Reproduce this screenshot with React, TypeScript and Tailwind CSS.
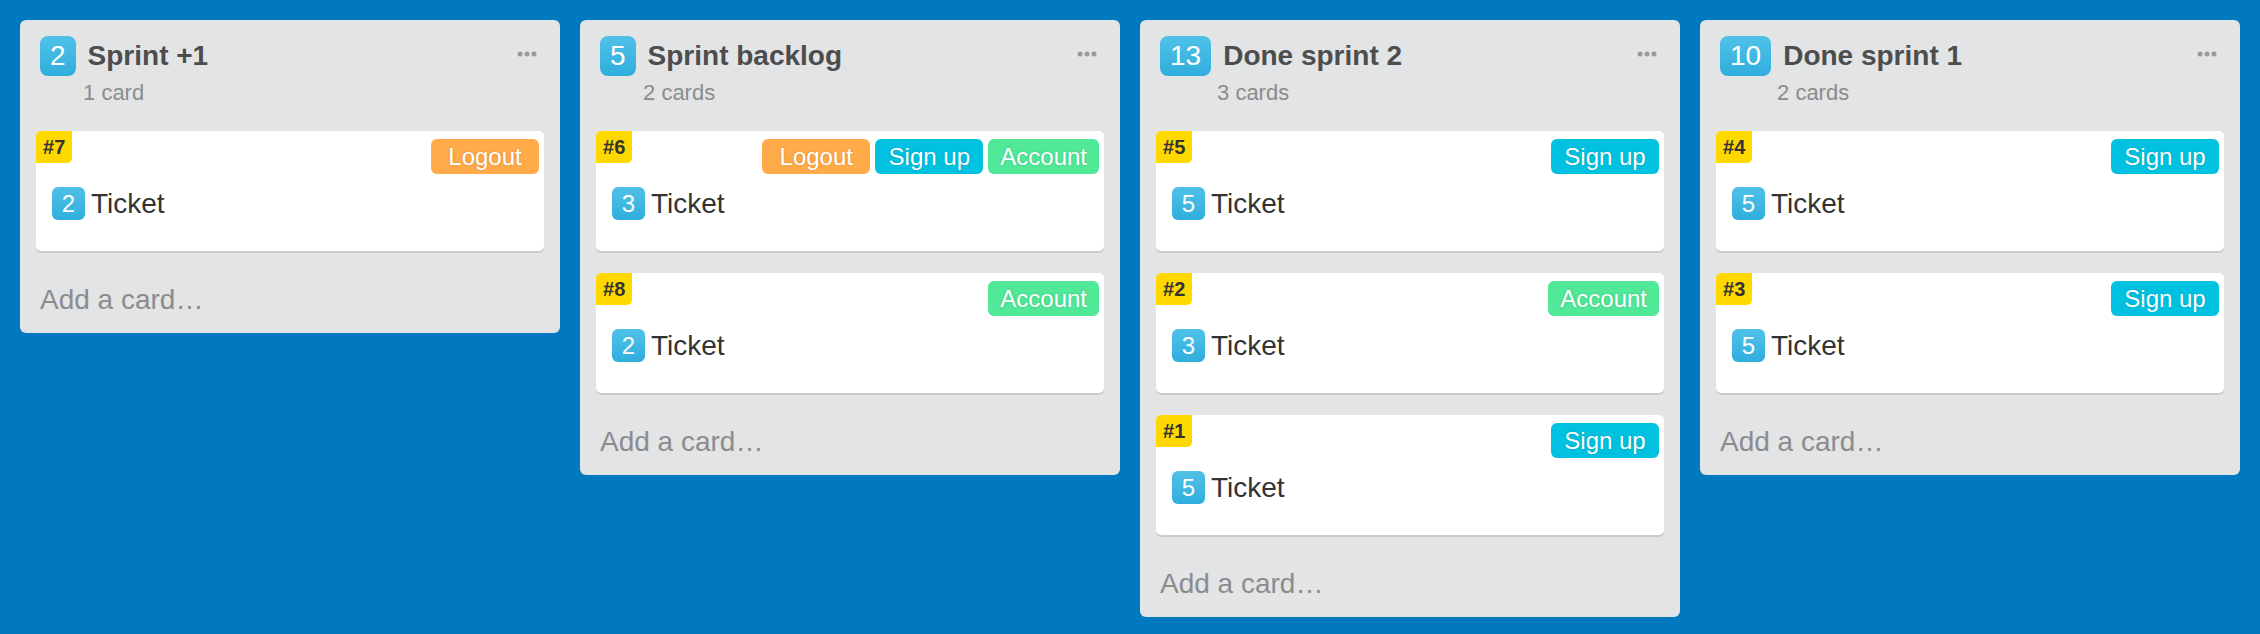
import React from "react";

type Label = "Logout" | "Sign up" | "Account";

type Ticket = {
  id: number;
  points: number;
  labels: Label[];
};

type Column = {
  points: number;
  title: string;
  tickets: Ticket[];
};

const labelColors: Record<Label, string> = {
  Logout: "bg-[#ffab4a]",
  "Sign up": "bg-[#00c2e0]",
  Account: "bg-[#51e898]",
};

const columns: Column[] = [
  {
    points: 2,
    title: "Sprint +1",
    tickets: [{ id: 7, points: 2, labels: ["Logout"] }],
  },
  {
    points: 5,
    title: "Sprint backlog",
    tickets: [
      { id: 6, points: 3, labels: ["Logout", "Sign up", "Account"] },
      { id: 8, points: 2, labels: ["Account"] },
    ],
  },
  {
    points: 13,
    title: "Done sprint 2",
    tickets: [
      { id: 5, points: 5, labels: ["Sign up"] },
      { id: 2, points: 3, labels: ["Account"] },
      { id: 1, points: 5, labels: ["Sign up"] },
    ],
  },
  {
    points: 10,
    title: "Done sprint 1",
    tickets: [
      { id: 4, points: 5, labels: ["Sign up"] },
      { id: 3, points: 5, labels: ["Sign up"] },
    ],
  },
];

const Dots = () => (
  <svg width="20" height="6" viewBox="0 0 20 6" className="fill-[#999]">
    <circle cx="3" cy="3" r="2.5" />
    <circle cx="10" cy="3" r="2.5" />
    <circle cx="17" cy="3" r="2.5" />
  </svg>
);

const TicketCard = ({ ticket }: { ticket: Ticket }) => (
  <div className="relative h-[120px] rounded-[5px] bg-white shadow-[0_2px_0_#c8cbce]">
    {/* ticket number tag */}
    <div className="absolute left-0 top-0 flex h-[32px] items-center rounded-tl-[5px] rounded-br-[5px] bg-[#ffd800] px-[7px] text-[20px] font-bold leading-none text-[#333]">
      #{ticket.id}
    </div>

    <div className="flex justify-end gap-[5px] pr-[5px] pt-[8px]">
      {ticket.labels.map((label) => (
        <span
          key={label}
          className={`flex h-[35px] min-w-[108px] items-center justify-center rounded-[6px] px-[12px] text-[24px] leading-none text-white [text-shadow:0_0_3px_rgba(0,0,0,0.15)] ${labelColors[label]}`}
        >
          {label}
        </span>
      ))}
    </div>

    <div className="mt-[13px] flex items-center gap-[6px] pl-[16px]">
      <span className="flex h-[33px] w-[33px] items-center justify-center rounded-[6px] bg-linear-to-b from-[#50c1e7] to-[#2eaedd] text-[24px] leading-none text-white">
        {ticket.points}
      </span>
      <span className="text-[28px] leading-none text-[#333]">Ticket</span>
    </div>
  </div>
);

const List = ({ column }: { column: Column }) => {
  const count = column.tickets.length;
  return (
    <section className="w-[540px] shrink-0 rounded-[6px] bg-[#e2e4e6] px-[16px] pt-[16px] pb-[17px]">
      <header className="pl-[4px]">
        <div className="flex items-center">
          <span className="flex h-[40px] items-center rounded-[8px] bg-linear-to-b from-[#4fc1e7] to-[#2faedd] px-[10px] text-[28px] leading-none text-white">
            {column.points}
          </span>
          <h2 className="ml-[12px] text-[28px] font-bold leading-none text-[#4d4d4d]">
            {column.title}
          </h2>
          <button className="ml-auto mr-[7px] mt-[-4px]">
            <Dots />
          </button>
        </div>
        <p
          className={`mt-[4px] text-[22px] leading-[26px] text-[#8c8c8c] ${
            column.points >= 10 ? "pl-[57px]" : "pl-[43px]"
          }`}
        >
          {count} {count === 1 ? "card" : "cards"}
        </p>
      </header>

      <div className="mt-[25px] flex flex-col gap-[22px]">
        {column.tickets.map((t) => (
          <TicketCard key={t.id} ticket={t} />
        ))}
      </div>

      <div className="mt-[33px] pl-[4px] text-[28px] leading-[32px] text-[#8c8c8c]">
        Add a card…
      </div>
    </section>
  );
};

export default function App() {
  return (
    <div className="flex h-[634px] items-start gap-[20px] bg-[#0079bf] p-[20px] font-['Liberation_Sans','Helvetica_Neue',Arial,sans-serif]">
      {columns.map((c) => (
        <List key={c.title} column={c} />
      ))}
    </div>
  );
}
